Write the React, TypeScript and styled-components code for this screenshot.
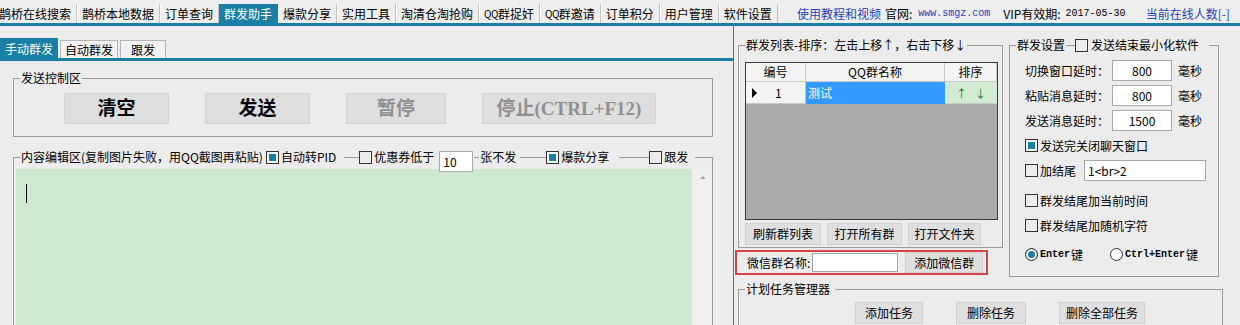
import React from "react";
import styled, { createGlobalStyle, css } from "styled-components";

const TEAL = "#1a7fa5";
const LINE = "#9a9a9a";
const BLUE_TEXT = "#1f3fbf";

const GlobalStyle = createGlobalStyle`
  html, body { margin: 0; padding: 0; background: #ececec; }
  body {
    font-family: "Noto Sans CJK SC", "Noto Sans", sans-serif;
    font-size: 12px;
    line-height: 14px;
    color: #000;
  }
`;

const Window = styled.div`
  width: 1240px;
  height: 325px;
  overflow: hidden;
  background: #ececec;
  display: flex;
  flex-direction: column;
`;

/* ---------- top menu tabs ---------- */
const TopBar = styled.div`
  display: flex;
  align-items: flex-end;
  height: 23px;
  flex: none;
  border-bottom: 3px solid ${TEAL};
  background: #eeeeee;
`;

const TopTab = styled.div<{ $active?: boolean }>`
  height: 19px;
  display: flex;
  align-items: center;
  padding: 0 5px;
  white-space: nowrap;
  border-right: 1px solid #c2c2c2;
  box-shadow: inset 1px 0 0 #ffffff;
  &:first-child {
    margin-left: -6px;
  }
  ${(p) =>
    p.$active &&
    css`
      background: ${TEAL};
      color: #fff;
      box-shadow: none;
      border-right-color: ${TEAL};
    `}
`;

const QQ = styled.span`
  font-size: 10px;
  letter-spacing: -0.5px;
`;

const InfoBar = styled.div`
  display: flex;
  align-items: center;
  height: 19px;
  margin-left: 19px;
  white-space: nowrap;
`;

const InfoText = styled.span<{ $blue?: boolean; $ml?: number }>`
  color: ${(p) => (p.$blue ? BLUE_TEXT : "#000")};
  margin-left: ${(p) => p.$ml ?? 0}px;
`;

const UrlText = styled.span`
  font-family: "Liberation Mono", monospace;
  font-size: 10px;
  color: ${BLUE_TEXT};
  margin-left: 6px;
`;

const MonoText = styled.span`
  font-family: "Liberation Mono", monospace;
  font-size: 10px;
  margin-left: 5px;
`;

/* ---------- body ---------- */
const Body = styled.div`
  display: flex;
  flex: 1;
  min-height: 0;
`;

const LeftPage = styled.div`
  width: 733px;
  flex: none;
  border-right: 1px solid #6e6e6e;
  padding-top: 12px;
  display: flex;
  flex-direction: column;
`;

const SubTabs = styled.div`
  display: flex;
  align-items: flex-end;
  height: 20px;
  flex: none;
  border-bottom: 3px solid ${TEAL};
`;

const SubTab = styled.div<{ $active?: boolean; $w: number }>`
  width: ${(p) => p.$w}px;
  height: ${(p) => (p.$active ? 20 : 18)}px;
  margin-right: 2px;
  box-sizing: border-box;
  display: flex;
  align-items: center;
  justify-content: center;
  border: 1px solid #b4b4b4;
  border-bottom: none;
  background: #f2f2f2;
  ${(p) =>
    p.$active &&
    css`
      background: ${TEAL};
      border-color: ${TEAL};
      color: #fff;
    `}
`;

const PageBody = styled.div`
  padding: 10px 20px 0 13px;
  display: flex;
  flex-direction: column;
  gap: 13px;
`;

/* ---------- group box ---------- */
const Group = styled.div<{ $w?: number }>`
  display: flex;
  flex-direction: column;
  flex: none;
  ${(p) => p.$w && `width: ${p.$w}px;`}
`;

const GroupHead = styled.div`
  display: flex;
  align-items: center;
  height: 14px;
  white-space: nowrap;
`;

const Corner = styled.div<{ $right?: boolean }>`
  width: 7px;
  height: 7px;
  flex: none;
  align-self: flex-end;
  box-sizing: border-box;
  border-top: 1px solid ${LINE};
  ${(p) => (p.$right ? "border-right" : "border-left")}: 1px solid ${LINE};
`;

const Rule = styled.div<{ $w?: number; $ml?: number }>`
  align-self: flex-end;
  height: 7px;
  box-sizing: border-box;
  border-top: 1px solid ${LINE};
  margin-left: ${(p) => p.$ml ?? 0}px;
  ${(p) => (p.$w ? `width: ${p.$w}px; flex: none;` : "flex: 1;")}
`;

const Legend = styled.span<{ $ml?: number; $pr?: number }>`
  padding: 0 ${(p) => p.$pr ?? 1}px 0 1px;
  margin-left: ${(p) => p.$ml ?? 0}px;
`;

const GroupBody = styled.div`
  border: 1px solid ${LINE};
  border-top: none;
`;

/* ---------- checks / radios / inputs ---------- */
const Check = styled.span<{ $on?: boolean; $ml?: number }>`
  width: 13px;
  height: 13px;
  flex: none;
  box-sizing: border-box;
  border: 1px solid #333;
  margin-left: ${(p) => p.$ml ?? 0}px;
  margin-right: 2px;
  background: ${(p) => (p.$on ? TEAL : "transparent")};
  box-shadow: ${(p) => (p.$on ? "inset 0 0 0 2px #fff" : "none")};
`;

const Radio = styled(Check)`
  border-radius: 50%;
  background: ${(p) => (p.$on ? TEAL : "#fff")};
`;

const TextBox = styled.div<{ $w: number; $h?: number; $center?: boolean; $ml?: number }>`
  width: ${(p) => p.$w}px;
  height: ${(p) => p.$h ?? 21}px;
  flex: none;
  box-sizing: border-box;
  background: #fff;
  border: 1px solid #a9a9a9;
  display: flex;
  align-items: center;
  justify-content: ${(p) => (p.$center ? "center" : "flex-start")};
  padding: 0 3px;
  margin-left: ${(p) => p.$ml ?? 0}px;
  font-size: 12px;
`;

const HeadInput = styled(TextBox)`
  align-self: flex-start;
  margin: 1px 1px 0 5px;
  position: relative;
  z-index: 1;
  align-items: flex-end;
  padding-bottom: 2px;
`;

/* ---------- send control ---------- */
const SendBody = styled(GroupBody)`
  display: flex;
  gap: 36px;
  padding: 8px 0 12px 50px;
`;

const BigButton = styled.div<{ $w: number; $disabled?: boolean }>`
  width: ${(p) => p.$w}px;
  height: 31px;
  box-sizing: border-box;
  display: flex;
  align-items: center;
  justify-content: center;
  background: #dedede;
  border: 1px solid #d2d2d2;
  font-family: "Liberation Serif", "Noto Sans CJK SC", serif;
  font-weight: bold;
  font-size: 19px;
  color: ${(p) => (p.$disabled ? "#909090" : "#000")};
`;

/* ---------- editor ---------- */
const EditGroup = styled(Group)`
  height: 200px;
`;

const EditBody = styled(GroupBody)`
  flex: 1;
  display: flex;
  padding: 5px 0 0 2px;
`;

const EditArea = styled.div`
  flex: 1;
  background: #cfe8d1;
  padding: 15px 0 0 10px;
`;

const Caret = styled.div`
  width: 1px;
  height: 19px;
  background: #000;
`;

const ScrollBar = styled.div`
  width: 19px;
  margin-left: 1px;
  background: #f0f0f0;
  display: flex;
  justify-content: center;
  &::before {
    content: "";
    margin-top: 7px;
    width: 0;
    height: 0;
    border-left: 3px solid transparent;
    border-right: 3px solid transparent;
    border-bottom: 3px solid #a6a6a6;
  }
`;

/* ---------- right area ---------- */
const RightArea = styled.div`
  flex: 1;
  padding: 12px 0 0 4px;
  display: flex;
  flex-direction: column;
`;

const TopRow = styled.div`
  display: flex;
  align-items: flex-start;
  gap: 6px;
`;

const ListCol = styled.div`
  width: 265px;
  display: flex;
  flex-direction: column;
`;

const ListBody = styled(GroupBody)`
  padding: 10px 4px 2px 6px;
`;

const DataGrid = styled.div`
  height: 158px;
  box-sizing: border-box;
  border: 1px solid #3a3a3a;
  background: #ababab;
  display: flex;
  flex-direction: column;
`;

const GridRow = styled.div<{ $head?: boolean }>`
  display: grid;
  grid-template-columns: 60px 139px 1fr;
  height: ${(p) => (p.$head ? 19 : 22)}px;
`;

type CellKind = "head" | "rowhead" | "selected" | "sort";

const Cell = styled.div<{ $kind: CellKind }>`
  box-sizing: border-box;
  display: flex;
  align-items: center;
  border-right: 1px solid #c9c9c9;
  border-bottom: 1px solid #c9c9c9;
  background: #f4f4f4;
  ${(p) => p.$kind === "head" && "justify-content: center;"}
  ${(p) => p.$kind === "rowhead" && "padding-left: 6px;"}
  ${(p) =>
    p.$kind === "selected" &&
    css`
      background: #3399ff;
      color: #fff;
      padding-left: 2px;
      border-color: #3399ff;
    `}
  ${(p) =>
    p.$kind === "sort" &&
    css`
      background: #d3ebd3;
      color: #1a7a2a;
      font-size: 11px;
      justify-content: center;
      gap: 8px;
      border-right: none;
    `}
`;

const RowArrow = styled.span`
  width: 0;
  height: 0;
  border-top: 5px solid transparent;
  border-bottom: 5px solid transparent;
  border-left: 5px solid #000;
  margin-right: 18px;
`;

const ButtonRow = styled.div<{ $gap: number; $mt?: number }>`
  display: flex;
  gap: ${(p) => p.$gap}px;
  margin-top: ${(p) => p.$mt ?? 0}px;
`;

const SmallButton = styled.div<{ $w: number; $h?: number; $ml?: number }>`
  width: ${(p) => p.$w}px;
  height: ${(p) => p.$h ?? 22}px;
  flex: none;
  box-sizing: border-box;
  display: flex;
  align-items: center;
  justify-content: center;
  background: #dfdfdf;
  border: 1px solid #d0d0d0;
  margin-left: ${(p) => p.$ml ?? 0}px;
  white-space: nowrap;
`;

const WxRow = styled.div`
  margin: 2px 0 0 -3px;
  width: 253px;
  height: 25px;
  box-sizing: border-box;
  border: 2px solid #d64545;
  display: flex;
  align-items: center;
  padding-left: 10px;
`;

const WxLabel = styled.span`
  margin-right: 2px;
`;

/* ---------- settings ---------- */
const SettingsBody = styled(GroupBody)`
  display: flex;
  flex-direction: column;
  padding: 8px 0 11px 15px;
`;

const SetRow = styled.div<{ $mt?: number }>`
  display: flex;
  align-items: center;
  height: 21px;
  margin-top: ${(p) => p.$mt ?? 0}px;
  white-space: nowrap;
`;

const SetLabel = styled.span`
  width: 87px;
  flex: none;
`;

const Unit = styled.span`
  margin-left: 6px;
`;

const KeyText = styled.span`
  font-family: "Liberation Mono", monospace;
  font-size: 10px;
  font-weight: bold;
  margin-right: 1px;
`;

const RadioGap = styled.span`
  width: 27px;
  flex: none;
`;

const TaskGroup = styled(Group)`
  margin-top: 5px;
`;

const TaskBody = styled(GroupBody)`
  height: 40px;
  padding: 6px 0 0 116px;
`;

const GroupBox = ({
  legend,
  children,
  w,
}: {
  legend: React.ReactNode;
  children: React.ReactNode;
  w?: number;
}) => (
  <Group $w={w}>
    <GroupHead>
      <Corner />
      {legend}
      <Rule />
      <Corner $right />
    </GroupHead>
    {children}
  </Group>
);

const topTabs: { key: string; label: React.ReactNode }[] = [
  { key: "search", label: "鹊桥在线搜索" },
  { key: "local", label: "鹊桥本地数据" },
  { key: "order", label: "订单查询" },
  { key: "mass", label: "群发助手" },
  { key: "hot", label: "爆款分享" },
  { key: "tools", label: "实用工具" },
  { key: "clear", label: "淘清仓淘抢购" },
  { key: "qqcatch", label: <><QQ>QQ</QQ>群捉奸</> },
  { key: "qqinvite", label: <><QQ>QQ</QQ>群邀请</> },
  { key: "points", label: "订单积分" },
  { key: "users", label: "用户管理" },
  { key: "settings", label: "软件设置" },
];

const delays = [
  { label: "切换窗口延时：", value: "800" },
  { label: "粘贴消息延时：", value: "800" },
  { label: "发送消息延时：", value: "1500" },
];

export default function App() {
  return (
    <>
      <GlobalStyle />
      <Window>
        <TopBar>
          {topTabs.map((t) => (
            <TopTab key={t.key} $active={t.key === "mass"}>
              {t.label}
            </TopTab>
          ))}
          <InfoBar>
            <InfoText $blue>使用教程和视频</InfoText>
            <InfoText $ml={4}>官网:</InfoText>
            <UrlText>www.smgz.com</UrlText>
            <InfoText $ml={13}>VIP有效期:</InfoText>
            <MonoText>2017-05-30</MonoText>
            <InfoText $blue $ml={20}>
              当前在线人数[-]
            </InfoText>
          </InfoBar>
        </TopBar>

        <Body>
          <LeftPage>
            <SubTabs>
              <SubTab $active $w={58}>
                手动群发
              </SubTab>
              <SubTab $w={58}>自动群发</SubTab>
              <SubTab $w={46}>跟发</SubTab>
            </SubTabs>
            <PageBody>
              <GroupBox legend={<Legend>发送控制区</Legend>}>
                <SendBody>
                  <BigButton $w={105}>清空</BigButton>
                  <BigButton $w={105}>发送</BigButton>
                  <BigButton $w={100} $disabled>
                    暂停
                  </BigButton>
                  <BigButton $w={174} $disabled>
                    停止(CTRL+F12)
                  </BigButton>
                </SendBody>
              </GroupBox>

              <EditGroup>
                <GroupHead>
                  <Corner />
                  <Legend>内容编辑区(复制图片失败，用QQ截图再粘贴)</Legend>
                  <Check $on $ml={2} />
                  <span>自动转PID</span>
                  <Rule $w={15} $ml={8} />
                  <Check />
                  <span>优惠券低于</span>
                  <HeadInput $w={34}>10</HeadInput>
                  <Rule $w={5} />
                  <Legend>张不发</Legend>
                  <Rule $w={26} $ml={3} />
                  <Check $on />
                  <span>爆款分享</span>
                  <Rule $w={30} $ml={10} />
                  <Check />
                  <span>跟发</span>
                  <Rule $ml={7} />
                  <Corner $right />
                </GroupHead>
                <EditBody>
                  <EditArea>
                    <Caret />
                  </EditArea>
                  <ScrollBar />
                </EditBody>
              </EditGroup>
            </PageBody>
          </LeftPage>

          <RightArea>
            <TopRow>
              <ListCol>
                <GroupBox legend={<Legend>群发列表-排序：左击上移↑，右击下移↓</Legend>}>
                  <ListBody>
                    <DataGrid>
                      <GridRow $head>
                        <Cell $kind="head">编号</Cell>
                        <Cell $kind="head">QQ群名称</Cell>
                        <Cell $kind="head">排序</Cell>
                      </GridRow>
                      <GridRow>
                        <Cell $kind="rowhead">
                          <RowArrow />1
                        </Cell>
                        <Cell $kind="selected">测试</Cell>
                        <Cell $kind="sort">
                          <span>↑</span>
                          <span>↓</span>
                        </Cell>
                      </GridRow>
                    </DataGrid>
                    <ButtonRow $gap={6} $mt={3}>
                      <SmallButton $w={76}>刷新群列表</SmallButton>
                      <SmallButton $w={75}>打开所有群</SmallButton>
                      <SmallButton $w={73}>打开文件夹</SmallButton>
                    </ButtonRow>
                  </ListBody>
                </GroupBox>
                <WxRow>
                  <WxLabel>微信群名称:</WxLabel>
                  <TextBox $w={86} $h={19} />
                  <SmallButton $w={78} $h={21} $ml={7}>
                    添加微信群
                  </SmallButton>
                </WxRow>
              </ListCol>

              <Group $w={210}>
                <GroupHead>
                  <Corner />
                  <Legend>群发设置</Legend>
                  <Rule $w={9} />
                  <Check />
                  <Legend $pr={10}>发送结束最小化软件</Legend>
                  <Rule />
                  <Corner $right />
                </GroupHead>
                <SettingsBody>
                  {delays.map((d, i) => (
                    <SetRow key={d.label} $mt={i === 0 ? 0 : 4}>
                      <SetLabel>{d.label}</SetLabel>
                      <TextBox $w={60} $center>
                        {d.value}
                      </TextBox>
                      <Unit>毫秒</Unit>
                    </SetRow>
                  ))}
                  <SetRow $mt={4}>
                    <Check $on />
                    发送完关闭聊天窗口
                  </SetRow>
                  <SetRow $mt={4}>
                    <Check />
                    加结尾
                    <TextBox $w={122} $ml={8}>
                      1&lt;br&gt;2
                    </TextBox>
                  </SetRow>
                  <SetRow $mt={9}>
                    <Check />
                    群发结尾加当前时间
                  </SetRow>
                  <SetRow $mt={4}>
                    <Check />
                    群发结尾加随机字符
                  </SetRow>
                  <SetRow $mt={8}>
                    <Radio $on />
                    <KeyText>Enter</KeyText>键
                    <RadioGap />
                    <Radio />
                    <KeyText>Ctrl+Enter</KeyText>键
                  </SetRow>
                </SettingsBody>
              </Group>
            </TopRow>

            <TaskGroup $w={485}>
              <GroupHead>
                <Corner />
                <Legend>计划任务管理器</Legend>
                <Rule $ml={4} />
                <Corner $right />
              </GroupHead>
              <TaskBody>
                <ButtonRow $gap={33}>
                  <SmallButton $w={68}>添加任务</SmallButton>
                  <SmallButton $w={70}>删除任务</SmallButton>
                  <SmallButton $w={86}>删除全部任务</SmallButton>
                </ButtonRow>
              </TaskBody>
            </TaskGroup>
          </RightArea>
        </Body>
      </Window>
    </>
  );
}
